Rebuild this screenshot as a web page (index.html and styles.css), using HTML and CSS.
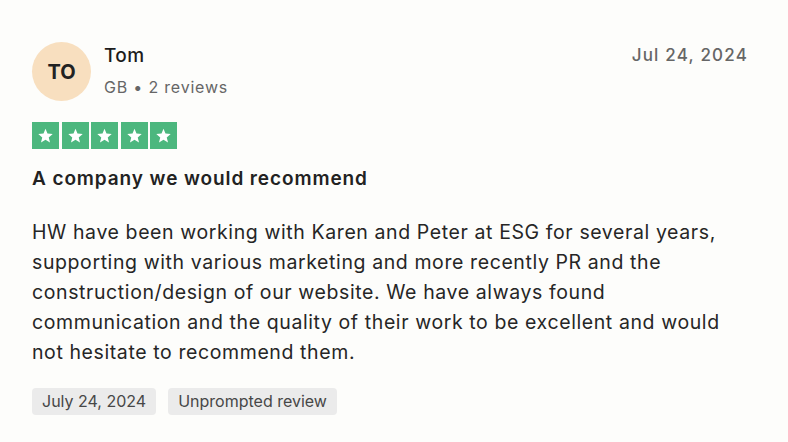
FILE: index.html
```html
<!DOCTYPE html>
<html lang="en">
<head>
  <meta charset="UTF-8" />
  <meta name="viewport" content="width=device-width, initial-scale=1.0"/>
  <title>Review - Tom</title>
  <link rel="stylesheet" href="styles.css">
</head>
<body>

  <div class="review-card">
    <div class="review-head">
      <div class="avatar">TO</div>
      <div class="reviewer">
        <div class="name">Tom</div>
        <div class="meta">GB &bull; 2 reviews</div>
      </div>
      <div class="date">Jul 24, 2024</div>
    </div>

    <div class="stars">
      <span class="star"><svg viewBox="0 0 24 24"><path d="M12 3.5l2.5 6.1 6.6.5-5 4.3 1.6 6.4L12 17.3l-5.7 3.5 1.6-6.4-5-4.3 6.6-.5z"/></svg></span>
      <span class="star"><svg viewBox="0 0 24 24"><path d="M12 3.5l2.5 6.1 6.6.5-5 4.3 1.6 6.4L12 17.3l-5.7 3.5 1.6-6.4-5-4.3 6.6-.5z"/></svg></span>
      <span class="star"><svg viewBox="0 0 24 24"><path d="M12 3.5l2.5 6.1 6.6.5-5 4.3 1.6 6.4L12 17.3l-5.7 3.5 1.6-6.4-5-4.3 6.6-.5z"/></svg></span>
      <span class="star"><svg viewBox="0 0 24 24"><path d="M12 3.5l2.5 6.1 6.6.5-5 4.3 1.6 6.4L12 17.3l-5.7 3.5 1.6-6.4-5-4.3 6.6-.5z"/></svg></span>
      <span class="star"><svg viewBox="0 0 24 24"><path d="M12 3.5l2.5 6.1 6.6.5-5 4.3 1.6 6.4L12 17.3l-5.7 3.5 1.6-6.4-5-4.3 6.6-.5z"/></svg></span>
    </div>

    <h3 class="title">A company we would recommend</h3>

    <p class="body">HW have been working with Karen and Peter at ESG for several years, supporting with various marketing and more recently PR and the construction/design of our website. We have always found communication and the quality of their work to be excellent and would not hesitate to recommend them.</p>

    <div class="tags">
      <span class="tag">July 24, 2024</span>
      <span class="tag">Unprompted review</span>
    </div>
  </div>

</body>
</html>
```

FILE: styles.css
```css
body {
  font-family: Inter, "Liberation Sans", sans-serif;
  background-color: #fdfdfb;
  color: #1c1c1c;
  margin: 0;
}

.review-card {
  padding: 42px 40px 0 32px;
}

.review-head {
  display: flex;
  align-items: flex-start;
}

.avatar {
  width: 59px;
  height: 59px;
  border-radius: 50%;
  background-color: #f8dfbf;
  display: flex;
  align-items: center;
  justify-content: center;
  font-size: 20px;
  font-weight: 700;
  color: #222;
  flex-shrink: 0;
}

.reviewer {
  margin-left: 13px;
  flex: 1;
}

.name {
  font-size: 19px;
  font-weight: 500;
  line-height: 24px;
  letter-spacing: 0.4px;
  margin-top: 2px;
}

.meta {
  font-size: 16px;
  color: #666;
  margin-top: 9px;
  letter-spacing: 0.8px;
}

.date {
  font-size: 17px;
  font-weight: 500;
  color: #666;
  margin-top: 3px;
  margin-left: 8px;
  letter-spacing: 1.2px;
}

.stars {
  display: flex;
  gap: 2.5px;
  margin-top: 21px;
}

.star {
  width: 27px;
  height: 27px;
  background-color: #4cb77e;
  display: flex;
  align-items: center;
  justify-content: center;
}

.star svg {
  width: 19px;
  height: 19px;
  fill: white;
}

.title {
  font-size: 19px;
  font-weight: 600;
  line-height: 24px;
  letter-spacing: 0.9px;
  color: #222;
  margin: 18px 0 0;
}

.body {
  font-size: 19.5px;
  line-height: 30px;
  letter-spacing: 0.6px;
  color: #262626;
  margin: 26px 0 0;
}

.tags {
  display: flex;
  gap: 12px;
  margin-top: 21px;
}

.tag {
  background-color: #ebebeb;
  color: #474747;
  font-size: 16px;
  line-height: 19px;
  padding: 4px 10px;
  border-radius: 4px;
}
```
